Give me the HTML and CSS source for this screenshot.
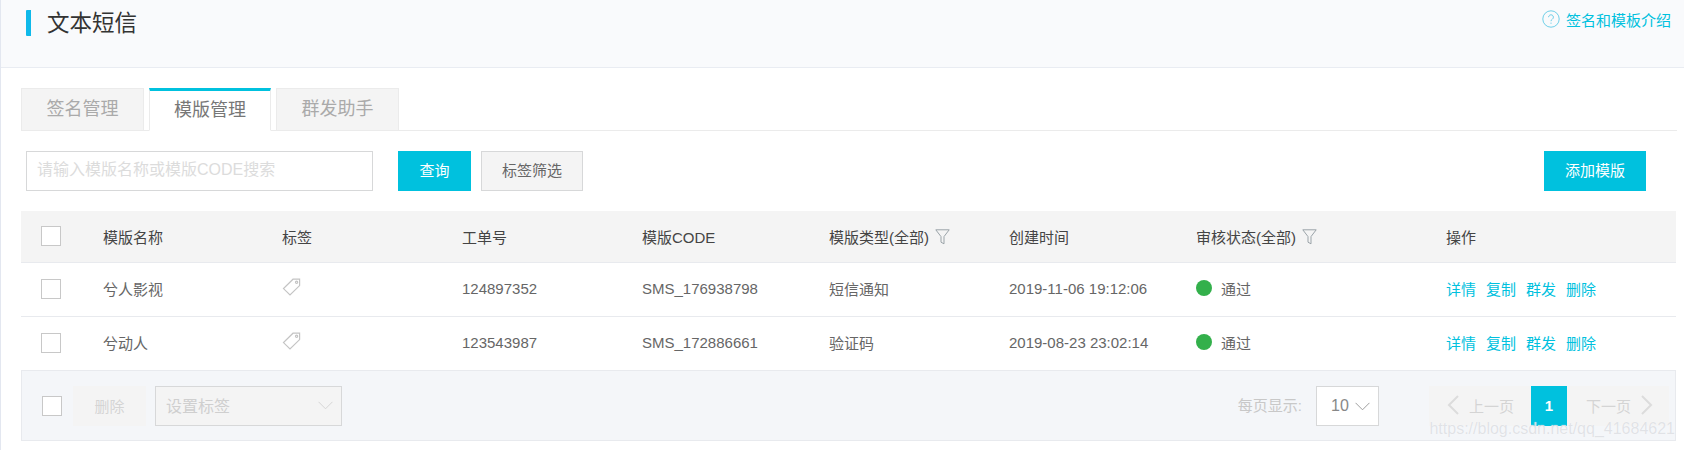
FILE: index.html
```html
<!DOCTYPE html>
<html lang="zh-CN">
<head>
    <meta charset="UTF-8">
    <title>文本短信</title>
    <link rel="stylesheet" href="styles.css">
</head>
<body>
    <div class="page">
        <div class="page-header">
            <h1 class="page-title">文本短信</h1>
            <a class="help-link">
                <svg class="help-icon" viewBox="0 0 18 18"><circle cx="9" cy="9" r="8.2"/><path d="M6.6 7.2a2.4 2.4 0 1 1 3.7 2c-.9.6-1.3 1-1.3 2"/><path d="M9 12.6v1.2"/></svg>
                签名和模板介绍
            </a>
        </div>

        <div class="tabs">
            <div class="tab">签名管理</div>
            <div class="tab active">模版管理</div>
            <div class="tab">群发助手</div>
        </div>

        <div class="toolbar">
            <input class="search-input" type="text" placeholder="请输入模版名称或模版CODE搜索">
            <button class="btn btn-primary btn-query">查询</button>
            <button class="btn btn-default">标签筛选</button>
            <button class="btn btn-primary btn-add">添加模版</button>
        </div>

        <table class="tpl-table">
            <colgroup>
                <col class="c-check"><col class="c-name"><col class="c-tag"><col class="c-order">
                <col class="c-code"><col class="c-type"><col class="c-time"><col class="c-status"><col class="c-ops">
            </colgroup>
            <thead>
                <tr>
                    <th class="check-cell"><span class="checkbox"></span></th>
                    <th>模版名称</th>
                    <th>标签</th>
                    <th>工单号</th>
                    <th>模版CODE</th>
                    <th>模版类型(全部)<svg class="filter-icon" viewBox="0 0 15 16"><path d="M.8.8h13.4L9 7.6v7.2l-3-1.6V7.6z"/></svg></th>
                    <th>创建时间</th>
                    <th>审核状态(全部)<svg class="filter-icon" viewBox="0 0 15 16"><path d="M.8.8h13.4L9 7.6v7.2l-3-1.6V7.6z"/></svg></th>
                    <th>操作</th>
                </tr>
            </thead>
            <tbody>
                <tr>
                    <td class="check-cell"><span class="checkbox"></span></td>
                    <td>兮人影视</td>
                    <td><svg class="tag-icon" viewBox="0 0 19 18"><path d="M11 1.2h6.6v6.4L8 17 1.5 10.6z"/><circle cx="14.6" cy="4.2" r="1.1"/></svg></td>
                    <td>124897352</td>
                    <td>SMS_176938798</td>
                    <td>短信通知</td>
                    <td>2019-11-06 19:12:06</td>
                    <td><span class="status"><i class="dot"></i>通过</span></td>
                    <td class="ops"><a>详情</a><a>复制</a><a>群发</a><a>删除</a></td>
                </tr>
                <tr>
                    <td class="check-cell"><span class="checkbox"></span></td>
                    <td>兮动人</td>
                    <td><svg class="tag-icon" viewBox="0 0 19 18"><path d="M11 1.2h6.6v6.4L8 17 1.5 10.6z"/><circle cx="14.6" cy="4.2" r="1.1"/></svg></td>
                    <td>123543987</td>
                    <td>SMS_172886661</td>
                    <td>验证码</td>
                    <td>2019-08-23 23:02:14</td>
                    <td><span class="status"><i class="dot"></i>通过</span></td>
                    <td class="ops"><a>详情</a><a>复制</a><a>群发</a><a>删除</a></td>
                </tr>
            </tbody>
        </table>

        <div class="table-footer">
            <span class="checkbox"></span>
            <button class="btn-disabled">删除</button>
            <div class="tag-select">
                设置标签
                <svg class="chevron" viewBox="0 0 16 9"><path d="M.6.6 8 8 15.4.6"/></svg>
            </div>
            <div class="footer-right">
                <span class="page-size-label">每页显示:</span>
                <div class="page-size">
                    10
                    <svg class="chevron" viewBox="0 0 16 9"><path d="M.6.6 8 8 15.4.6"/></svg>
                </div>
                <div class="pager">
                    <span class="pager-btn pager-prev">
                        <svg class="pager-arrow" viewBox="0 0 12 20"><path d="M11 1 2 10l9 9"/></svg>
                        上一页
                    </span>
                    <span class="pager-num">1</span>
                    <span class="pager-btn pager-next">
                        下一页
                        <svg class="pager-arrow" viewBox="0 0 12 20"><path d="m1 1 9 9-9 9"/></svg>
                    </span>
                </div>
            </div>
            <div class="watermark">https://blog.csdn.net/qq_41684621</div>
        </div>
    </div>
</body>
</html>
```

FILE: styles.css
```css
:root {
    --primary: #00c1de;
    --line: #e8eaee;
}

* {
    box-sizing: border-box;
}

html, body {
    margin: 0;
    height: 450px;
    overflow: hidden;
    background: white;
}

body {
    font-family: "Liberation Sans", "Noto Sans CJK SC", sans-serif;
    font-size: 15px;
    color: #666;
}

.page {
    height: 450px;
    border-left: 1px solid #e3e7f0;
}

.page-header {
    height: 68px;
    background: #f9fafc;
    border-bottom: 1px solid #e9ecf2;
    display: flex;
    justify-content: space-between;
    align-items: flex-start;
    padding: 10px 13px 0 25px;
}

.page-title {
    margin: 0;
    height: 26px;
    line-height: 28px;
    font-size: 22.5px;
    font-weight: normal;
    color: #333;
    padding-left: 16px;
    border-left: 5px solid #0fb9ea;
    border-radius: 1px;
}

.help-link {
    display: flex;
    align-items: center;
    gap: 6px;
    height: 18px;
    color: var(--primary);
}

.help-icon {
    width: 18px;
    height: 18px;
    fill: none;
    stroke: #6fcfe8;
    stroke-width: 1;
}

.tabs {
    display: flex;
    gap: 5px;
    margin: 20px 7px 0 20px;
    height: 43px;
    border-bottom: 1px solid #ebebeb;
}

.tab {
    width: 123px;
    height: 43px;
    line-height: 41px;
    text-align: center;
    font-size: 18px;
    color: #aaa;
    background: #f4f4f4;
    border: 1px solid #ebebeb;
}

.tab.active {
    width: 122px;
    color: #777;
    background: white;
    border-top: 3px solid var(--primary);
    border-bottom: 1px solid white;
    line-height: 38px;
}

.toolbar {
    display: flex;
    align-items: center;
    margin: 20px 38px 0 25px;
    height: 40px;
}

.search-input {
    width: 347px;
    height: 40px;
    padding: 0 10px 2px;
    border: 1px solid #d7d8d9;
    font-family: inherit;
    font-size: 16px;
    outline: none;
}

.search-input::placeholder {
    color: #dcdcdc;
}

.btn {
    height: 40px;
    padding: 0 0 3px;
    border: none;
    font-family: inherit;
    font-size: 15px;
}

.btn-primary {
    background: var(--primary);
    color: white;
}

.btn-query {
    width: 73px;
    margin-left: 25px;
}

.btn-default {
    width: 102px;
    margin-left: 10px;
    background: #f4f4f4;
    color: #666;
    border: 1px solid #d7d8d9;
}

.btn-add {
    width: 102px;
    margin-left: auto;
}

.tpl-table {
    width: 1655px;
    margin: 20px 0 0 20px;
    border-collapse: collapse;
    table-layout: fixed;
}

.c-check { width: 82px; }
.c-name { width: 179px; }
.c-tag { width: 180px; }
.c-order { width: 180px; }
.c-code { width: 187px; }
.c-type { width: 180px; }
.c-time { width: 187px; }
.c-status { width: 250px; }
.c-ops { width: 230px; }

.tpl-table th {
    height: 51px;
    padding: 0;
    text-align: left;
    font-weight: normal;
    color: #444;
    background: #f4f4f4;
    border-bottom: 1px solid var(--line);
}

.tpl-table td {
    height: 54px;
    padding: 0 0 2px;
    border-bottom: 1px solid var(--line);
}

.tpl-table .check-cell {
    padding: 0 0 0 20px;
}

.checkbox {
    display: block;
    width: 20px;
    height: 20px;
    background: white;
    border: 1px solid #c8c8c8;
}

.filter-icon {
    width: 15px;
    height: 16px;
    margin-left: 6px;
    vertical-align: -2px;
    fill: none;
    stroke: #9aa3a8;
    stroke-width: 1;
}

.tag-icon {
    display: block;
    width: 19px;
    height: 18px;
    margin-top: -3px;
    fill: none;
    stroke: #c4c4c4;
    stroke-width: 1.2;
}

.status {
    display: flex;
    align-items: center;
    gap: 9px;
}

.dot {
    width: 16px;
    height: 16px;
    border-radius: 50%;
    background: #33b04b;
}

.ops a {
    color: var(--primary);
    margin-right: 10px;
}

.table-footer {
    position: relative;
    display: flex;
    align-items: center;
    width: 1655px;
    height: 70px;
    margin-left: 20px;
    padding: 2px 0 0 20px;
    background: #f4f6f9;
    border: 1px solid var(--line);
    border-top: none;
}

.btn-disabled {
    width: 73px;
    height: 40px;
    margin-left: 11px;
    padding: 0 0 2px;
    border: none;
    background: #f4f4f4;
    color: #d4d4d4;
    font-family: inherit;
    font-size: 15px;
}

.tag-select {
    display: flex;
    align-items: center;
    justify-content: space-between;
    width: 187px;
    height: 40px;
    margin-left: 9px;
    padding: 0 8px 2px 10px;
    background: #f4f4f4;
    border: 1px solid #d7d8d9;
    font-size: 16px;
    color: #cfcfcf;
}

.chevron {
    width: 15px;
    height: 9px;
    fill: none;
    stroke: #d2d2d2;
    stroke-width: 1;
}

.footer-right {
    display: flex;
    align-items: center;
    margin-left: auto;
    margin-right: 6px;
}

.page-size-label {
    margin-bottom: 4px;
    color: #c8c8c8;
}

.page-size {
    display: flex;
    align-items: center;
    justify-content: space-between;
    width: 63px;
    height: 40px;
    margin-left: 14px;
    padding: 0 8px 0 14px;
    background: white;
    border: 1px solid #d7d8d9;
    font-size: 16px;
    color: #888;
}

.page-size .chevron {
    stroke: #999;
}

.pager {
    display: flex;
    height: 40px;
    margin-left: 50px;
}

.pager-btn {
    display: flex;
    align-items: center;
    width: 102px;
    padding-bottom: 2px;
    background: #f4f4f4;
    color: #d4d4d4;
}

.pager-prev {
    padding-left: 18px;
    gap: 10px;
}

.pager-next {
    padding-left: 19px;
    gap: 10px;
}

.pager-arrow {
    width: 12px;
    height: 20px;
    fill: none;
    stroke: #dcdcdc;
    stroke-width: 2;
}

.pager-num {
    width: 36px;
    line-height: 40px;
    text-align: center;
    font-weight: bold;
    background: var(--primary);
    color: white;
}

.watermark {
    position: absolute;
    right: 0;
    bottom: 2px;
    font-size: 16px;
    color: rgba(215, 217, 222, 0.75);
    text-shadow: 0 0 1px white;
}
```
